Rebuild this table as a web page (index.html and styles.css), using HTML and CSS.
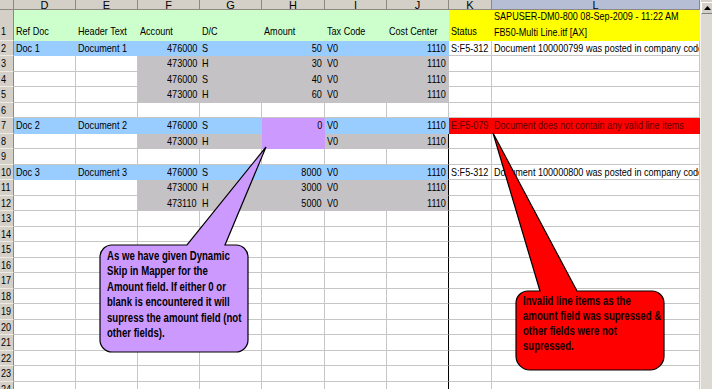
FILE: index.html
```html
<!DOCTYPE html>
<html>
<head>
<meta charset="utf-8">
<link rel="stylesheet" href="styles.css">
</head>
<body>
<div class="app">
  <div class="sheet">
    <div class="row hdr">
      <div class="ch rh"></div>
      <div class="ch w62">D</div><div class="ch w62">E</div><div class="ch w62">F</div><div class="ch w62">G</div>
      <div class="ch w63">H</div><div class="ch w62">I</div><div class="ch w62">J</div><div class="ch k">K</div><div class="ch l sel">L</div>
    </div>
    <div class="row r1">
      <div class="c rh"><span class="t">1</span></div>
      <div class="c w62 g"><span class="t">Ref Doc</span></div><div class="c w62 g"><span class="t">Header Text</span></div><div class="c w62 g"><span class="t">Account</span></div><div class="c w62 g"><span class="t">D/C</span></div>
      <div class="c w63 g"><span class="t">Amount</span></div><div class="c w62 g"><span class="t">Tax Code</span></div><div class="c w62 g"><span class="t">Cost Center</span></div>
      <div class="c k y"><span class="t">Status</span></div>
      <div class="c l y two"><span class="t">SAPUSER-DM0-800 08-Sep-2009 - 11:22 AM</span><span class="t">FB50-Multi Line.itf [AX]</span></div>
    </div>
    <div class="row r15">
      <div class="c rh"><span class="t">2</span></div>
      <div class="c w62 b"><span class="t">Doc 1</span></div><div class="c w62 b"><span class="t">Document 1</span></div><div class="c w62 b n"><span class="t">476000</span></div><div class="c w62 b"><span class="t">S</span></div>
      <div class="c w63 b n"><span class="t">50</span></div><div class="c w62 b"><span class="t">V0</span></div><div class="c w62 b n"><span class="t">1110</span></div>
      <div class="c k"><span class="t">S:F5-312</span></div><div class="c l"><span class="t">Document 100000799 was posted in company code 1000</span></div>
    </div>
    <div class="row r16">
      <div class="c rh"><span class="t">3</span></div>
      <div class="c w62"></div><div class="c w62"></div><div class="c w62 s n"><span class="t">473000</span></div><div class="c w62 s"><span class="t">H</span></div>
      <div class="c w63 s n"><span class="t">30</span></div><div class="c w62 s"><span class="t">V0</span></div><div class="c w62 s n"><span class="t">1110</span></div>
      <div class="c k"></div><div class="c l"></div>
    </div>
    <div class="row r15">
      <div class="c rh"><span class="t">4</span></div>
      <div class="c w62"></div><div class="c w62"></div><div class="c w62 s n"><span class="t">476000</span></div><div class="c w62 s"><span class="t">S</span></div>
      <div class="c w63 s n"><span class="t">40</span></div><div class="c w62 s"><span class="t">V0</span></div><div class="c w62 s n"><span class="t">1110</span></div>
      <div class="c k"></div><div class="c l"></div>
    </div>
    <div class="row r16">
      <div class="c rh"><span class="t">5</span></div>
      <div class="c w62"></div><div class="c w62"></div><div class="c w62 s n"><span class="t">473000</span></div><div class="c w62 s"><span class="t">H</span></div>
      <div class="c w63 s n"><span class="t">60</span></div><div class="c w62 s"><span class="t">V0</span></div><div class="c w62 s n"><span class="t">1110</span></div>
      <div class="c k"></div><div class="c l"></div>
    </div>
    <div class="row r15">
      <div class="c rh"><span class="t">6</span></div>
      <div class="c w62"></div><div class="c w62"></div><div class="c w62"></div><div class="c w62"></div>
      <div class="c w63"></div><div class="c w62"></div><div class="c w62"></div>
      <div class="c k"></div><div class="c l"></div>
    </div>
    <div class="row r16">
      <div class="c rh"><span class="t">7</span></div>
      <div class="c w62 b"><span class="t">Doc 2</span></div><div class="c w62 b"><span class="t">Document 2</span></div><div class="c w62 b n"><span class="t">476000</span></div><div class="c w62 b"><span class="t">S</span></div>
      <div class="c w63 p n"><span class="t">0</span></div><div class="c w62 b"><span class="t">V0</span></div><div class="c w62 b n"><span class="t">1110</span></div>
      <div class="c k red"><span class="t">E:F5-079</span></div><div class="c l red"><span class="t">Document does not contain any valid line items</span></div>
    </div>
    <div class="row r15">
      <div class="c rh"><span class="t">8</span></div>
      <div class="c w62"></div><div class="c w62"></div><div class="c w62 s n"><span class="t">473000</span></div><div class="c w62 s"><span class="t">H</span></div>
      <div class="c w63 p n"></div><div class="c w62 s"><span class="t">V0</span></div><div class="c w62 s n edge"><span class="t">1110</span></div>
      <div class="c k"></div><div class="c l"></div>
    </div>
    <div class="row r16">
      <div class="c rh"><span class="t">9</span></div>
      <div class="c w62"></div><div class="c w62"></div><div class="c w62"></div><div class="c w62"></div>
      <div class="c w63"></div><div class="c w62"></div><div class="c w62 edge"></div>
      <div class="c k"></div><div class="c l"></div>
    </div>
    <div class="row r15">
      <div class="c rh"><span class="t">10</span></div>
      <div class="c w62 b"><span class="t">Doc 3</span></div><div class="c w62 b"><span class="t">Document 3</span></div><div class="c w62 b n"><span class="t">476000</span></div><div class="c w62 b"><span class="t">S</span></div>
      <div class="c w63 b n"><span class="t">8000</span></div><div class="c w62 b"><span class="t">V0</span></div><div class="c w62 b n edge"><span class="t">1110</span></div>
      <div class="c k"><span class="t">S:F5-312</span></div><div class="c l"><span class="t">Document 100000800 was posted in company code 1000</span></div>
    </div>
    <div class="row r16">
      <div class="c rh"><span class="t">11</span></div>
      <div class="c w62"></div><div class="c w62"></div><div class="c w62 s n"><span class="t">473000</span></div><div class="c w62 s"><span class="t">H</span></div>
      <div class="c w63 s n"><span class="t">3000</span></div><div class="c w62 s"><span class="t">V0</span></div><div class="c w62 s n edge"><span class="t">1110</span></div>
      <div class="c k"></div><div class="c l"></div>
    </div>
    <div class="row r15">
      <div class="c rh"><span class="t">12</span></div>
      <div class="c w62"></div><div class="c w62"></div><div class="c w62 s n"><span class="t">473110</span></div><div class="c w62 s"><span class="t">H</span></div>
      <div class="c w63 s n"><span class="t">5000</span></div><div class="c w62 s"><span class="t">V0</span></div><div class="c w62 s n edge"><span class="t">1110</span></div>
      <div class="c k"></div><div class="c l"></div>
    </div>
    <div class="row r16"><div class="c rh"><span class="t">13</span></div><div class="c w62"></div><div class="c w62"></div><div class="c w62"></div><div class="c w62"></div><div class="c w63"></div><div class="c w62"></div><div class="c w62 edge"></div><div class="c k"></div><div class="c l"></div></div>
    <div class="row r15"><div class="c rh"><span class="t">14</span></div><div class="c w62"></div><div class="c w62"></div><div class="c w62"></div><div class="c w62"></div><div class="c w63"></div><div class="c w62"></div><div class="c w62 edge"></div><div class="c k"></div><div class="c l"></div></div>
    <div class="row r16"><div class="c rh"><span class="t">15</span></div><div class="c w62"></div><div class="c w62"></div><div class="c w62"></div><div class="c w62"></div><div class="c w63"></div><div class="c w62"></div><div class="c w62 edge"></div><div class="c k"></div><div class="c l"></div></div>
    <div class="row r15"><div class="c rh"><span class="t">16</span></div><div class="c w62"></div><div class="c w62"></div><div class="c w62"></div><div class="c w62"></div><div class="c w63"></div><div class="c w62"></div><div class="c w62 edge"></div><div class="c k"></div><div class="c l"></div></div>
    <div class="row r16"><div class="c rh"><span class="t">17</span></div><div class="c w62"></div><div class="c w62"></div><div class="c w62"></div><div class="c w62"></div><div class="c w63"></div><div class="c w62"></div><div class="c w62 edge"></div><div class="c k"></div><div class="c l"></div></div>
    <div class="row r15"><div class="c rh"><span class="t">18</span></div><div class="c w62"></div><div class="c w62"></div><div class="c w62"></div><div class="c w62"></div><div class="c w63"></div><div class="c w62"></div><div class="c w62 edge"></div><div class="c k"></div><div class="c l"></div></div>
    <div class="row r16"><div class="c rh"><span class="t">19</span></div><div class="c w62"></div><div class="c w62"></div><div class="c w62"></div><div class="c w62"></div><div class="c w63"></div><div class="c w62"></div><div class="c w62 edge"></div><div class="c k"></div><div class="c l"></div></div>
    <div class="row r15"><div class="c rh"><span class="t">20</span></div><div class="c w62"></div><div class="c w62"></div><div class="c w62"></div><div class="c w62"></div><div class="c w63"></div><div class="c w62"></div><div class="c w62 edge"></div><div class="c k"></div><div class="c l"></div></div>
    <div class="row r16"><div class="c rh"><span class="t">21</span></div><div class="c w62"></div><div class="c w62"></div><div class="c w62"></div><div class="c w62"></div><div class="c w63"></div><div class="c w62"></div><div class="c w62 edge"></div><div class="c k"></div><div class="c l"></div></div>
    <div class="row r15"><div class="c rh"><span class="t">22</span></div><div class="c w62"></div><div class="c w62"></div><div class="c w62"></div><div class="c w62"></div><div class="c w63"></div><div class="c w62"></div><div class="c w62 edge"></div><div class="c k"></div><div class="c l"></div></div>
    <div class="row r16"><div class="c rh"><span class="t">23</span></div><div class="c w62"></div><div class="c w62"></div><div class="c w62"></div><div class="c w62"></div><div class="c w63"></div><div class="c w62"></div><div class="c w62 edge"></div><div class="c k"></div><div class="c l"></div></div>
    <div class="row r15"><div class="c rh"><span class="t">24</span></div><div class="c w62"></div><div class="c w62"></div><div class="c w62"></div><div class="c w62"></div><div class="c w63"></div><div class="c w62"></div><div class="c w62 edge"></div><div class="c k"></div><div class="c l"></div></div>
  </div>
  <div class="vscroll">
    <div class="up"><svg width="7" height="4" viewBox="0 0 7 4"><path d="M0 4 L3.5 0 L7 4 Z" fill="#000"/></svg></div>
    <div class="track"></div>
  </div>

  <svg class="shapes" width="712" height="389" viewBox="0 0 712 389">
    <path d="M113,245 L187,245 L266,147 L225,245 L236,245 A12,12 0 0 1 248,257 L248,340 A12,12 0 0 1 236,352 L112,352 A12,12 0 0 1 100,340 L100,257 A12,12 0 0 1 112,245 Z" fill="#cc99ff" stroke="#000" stroke-width="1.2"/>
    <path d="M528,291 L540,291 L493,133 L577,291 L652,291 A12,12 0 0 1 664,303 L664,356 A14,14 0 0 1 650,370 L530,370 A14,14 0 0 1 516,356 L516,303 A12,12 0 0 1 528,291 Z" fill="#ff0000" stroke="#000" stroke-width="1.2"/>
  </svg>
  <div class="note note-purple">As we have given Dynamic<br>Skip in Mapper for the<br>Amount field. If either 0 or<br>blank is encountered it will<br>supress the amount field (not<br>other fields).</div>
  <div class="note note-red">Invalid line items as the<br>amount field was supressed &amp;<br>other fields were not<br>supressed.</div>
</div>
</body>
</html>
```

FILE: styles.css
```css
html, body {
  margin: 0;
  padding: 0;
}
body {
  width: 712px;
  height: 389px;
  overflow: hidden;
  background: #ffffff;
  color: #000000;
  font-family: "Liberation Sans", Arial, sans-serif;
  font-size: 11.5px;
}
.app {
  position: relative;
  display: flex;
  width: 712px;
  height: 389px;
  overflow: hidden;
}
.sheet {
  width: 700px;
  flex: none;
  display: flex;
  flex-direction: column;
  overflow: hidden;
}
.row {
  display: flex;
  flex: none;
}
.hdr { height: 10px; }
.r1 { height: 31px; }
.r15 { height: 15px; }
.r16 { height: 16px; }

.ch, .c {
  box-sizing: border-box;
  height: 100%;
  flex: none;
  white-space: nowrap;
  overflow: hidden;
}
.ch {
  background: #d4d0c8;
  border-right: 1px solid #8c8982;
  border-bottom: 1px solid #8c8982;
  text-align: center;
  font-size: 11px;
  line-height: 10px;
}
.ch.sel { background: #b6bed6; }

.c {
  border-right: 1px solid #c6c6c6;
  border-bottom: 1px solid #c6c6c6;
  padding: 0 2px;
  line-height: 14px;
}
.r16 .c { line-height: 15px; }

/* condensed text, as the narrow sheet font of the reference */
.t {
  display: inline-block;
  transform: scaleX(0.79);
  transform-origin: 0 50%;
}
.n .t { transform-origin: 100% 50%; }

.rh { width: 14px; }
.w62 { width: 62px; }
.w63 { width: 63px; }
.k { width: 43px; }
.l { width: 208px; }

.c.rh {
  background: #d4d0c8;
  border-right: 1px solid #8c8982;
  border-bottom: 1px solid #eeebe5;
  padding: 0 0 0 1px;
}

.r1 .c {
  display: flex;
  align-items: flex-end;
  line-height: 15px;
  padding-bottom: 1px;
}
.r1 .c.two {
  flex-direction: column;
  justify-content: flex-end;
  align-items: flex-start;
  line-height: 16px;
  padding-bottom: 0;
}

.n { text-align: right; }

.g { background: #ccffcc; border-color: #ccffcc; }
.y { background: #ffff00; border-color: #ffff00; }
.b { background: #99ccff; border-color: #99ccff; }
.s { background: #c4c2c4; border-color: #c4c2c4; }
.p { background: #cc99ff; border-color: #cc99ff; }
.red { background: #ff0000; border-color: #ff0000; color: #5e0000; }
.c.edge { border-right-color: #000000; }

.vscroll {
  width: 12px;
  flex: none;
  display: flex;
  flex-direction: column;
  background: #d4d0c8;
  border-left: 1px solid #f4f3ef;
  box-sizing: border-box;
}
.up {
  margin-top: 2px;
  height: 12px;
  box-sizing: border-box;
  background: #d4d0c8;
  border-top: 1px solid #ffffff;
  border-left: 1px solid #ffffff;
  border-bottom: 1px solid #808080;
  display: flex;
  align-items: center;
  justify-content: center;
}
.track {
  flex: 1;
  background: #dcd9d2;
}

.shapes {
  position: absolute;
  left: 0;
  top: 0;
  pointer-events: none;
}
.note {
  position: absolute;
  font-weight: bold;
  font-size: 12px;
  line-height: 15.4px;
  white-space: nowrap;
  color: #000000;
  transform: scaleX(0.8);
  transform-origin: 0 0;
}
.note-purple {
  left: 107px;
  top: 249px;
}
.note-red {
  left: 523px;
  top: 294px;
  line-height: 15px;
  color: #100000;
}
```
